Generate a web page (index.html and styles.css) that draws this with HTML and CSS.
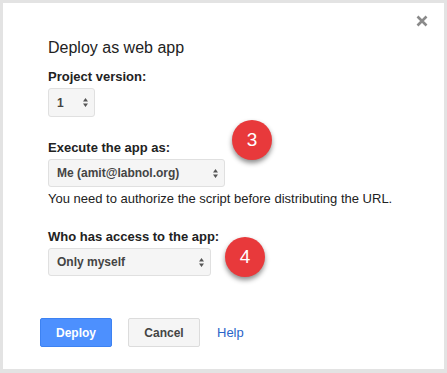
FILE: index.html
```html
<!DOCTYPE html>
<html lang="en">
  <head>
    <meta charset="UTF-8" />
    <meta name="viewport" content="width=device-width, initial-scale=1.0" />
    <title>Deploy as web app</title>
    <link rel="stylesheet" href="styles.css">
  </head>
  <body>
    <div class="dialog">
      <button class="close" title="Close">
        <svg width="12" height="12" viewBox="0 0 12 12">
          <path d="M1.5 1.5 L10.5 10.5 M10.5 1.5 L1.5 10.5" stroke="#8a8a8a" stroke-width="2.6" />
        </svg>
      </button>

      <h1>Deploy as web app</h1>

      <div class="field first">
        <label>Project version:</label>
        <div class="select version">
          <span>1</span>
          <svg class="arrows" width="5" height="9" viewBox="0 0 5 9">
            <path d="M2.5 0 L5 3.5 L0 3.5 Z M2.5 9 L5 5.5 L0 5.5 Z" fill="#555" />
          </svg>
        </div>
      </div>

      <div class="field">
        <label>Execute the app as:</label>
        <div class="select execute">
          <span>Me (amit@labnol.org)</span>
          <svg class="arrows" width="5" height="9" viewBox="0 0 5 9">
            <path d="M2.5 0 L5 3.5 L0 3.5 Z M2.5 9 L5 5.5 L0 5.5 Z" fill="#555" />
          </svg>
        </div>
        <p class="hint">You need to authorize the script before distributing the URL.</p>
      </div>

      <div class="field">
        <label>Who has access to the app:</label>
        <div class="select access">
          <span>Only myself</span>
          <svg class="arrows" width="5" height="9" viewBox="0 0 5 9">
            <path d="M2.5 0 L5 3.5 L0 3.5 Z M2.5 9 L5 5.5 L0 5.5 Z" fill="#555" />
          </svg>
        </div>
      </div>

      <div class="actions">
        <button class="btn deploy">Deploy</button>
        <button class="btn cancel">Cancel</button>
        <a href="#" class="help">Help</a>
      </div>

      <span class="badge badge-3">3</span>
      <span class="badge badge-4">4</span>
    </div>
  </body>
</html>
```

FILE: styles.css
```css
body {
  font-family: "Liberation Sans", Arial, sans-serif;
  margin: 0;
  padding: 3px;
  background-color: #e3e3e3;
  color: #222;
}
.dialog {
  position: relative;
  background: white;
  height: 366px;
  box-sizing: border-box;
  padding: 36px 0 0 45px;
}
.close {
  position: absolute;
  top: 12px;
  right: 16px;
  padding: 0;
  border: none;
  background: none;
  cursor: pointer;
}
.close svg {
  display: block;
}
h1 {
  margin: 0;
  font-size: 16px;
  font-weight: normal;
  line-height: 18px;
}
.field {
  margin-top: 23px;
}
.field.first {
  margin-top: 12px;
}
label {
  display: block;
  font-size: 13px;
  font-weight: bold;
  line-height: 15px;
  margin-bottom: 4px;
}
.select {
  display: flex;
  align-items: center;
  justify-content: space-between;
  box-sizing: border-box;
  height: 28px;
  padding: 0 6px 0 8px;
  background: #f5f5f5;
  border: 1px solid #e0e0e0;
  border-radius: 3px;
  font-size: 12px;
  font-weight: bold;
  color: #444;
}
.select.version {
  width: 47px;
  height: 29px;
}
.select.execute {
  width: 177px;
}
.select.access {
  width: 163px;
}
.hint {
  margin: 4px 0 0;
  font-size: 13px;
  line-height: 15px;
}
.actions {
  display: flex;
  align-items: center;
  margin: 42px 0 0 -8px;
}
.btn {
  height: 29px;
  width: 72px;
  border-radius: 2px;
  font-family: "Liberation Sans", Arial, sans-serif;
  font-size: 12px;
  font-weight: bold;
  cursor: pointer;
}
.deploy {
  background-color: #4d90fe;
  border: 1px solid #3d82f2;
  color: white;
}
.cancel {
  margin-left: 16px;
  background-color: #f5f5f5;
  border: 1px solid #dcdcdc;
  color: #444;
}
.help {
  margin-left: 17px;
  font-size: 13px;
  color: #2a64c9;
  text-decoration: none;
}
.badge {
  position: absolute;
  width: 40px;
  height: 40px;
  border-radius: 50%;
  background: #e8393b;
  box-shadow: 0 3px 5px rgba(0, 0, 0, 0.45);
  color: white;
  font-size: 19px;
  line-height: 40px;
  text-align: center;
}
.badge-3 {
  left: 229px;
  top: 117px;
}
.badge-4 {
  left: 222px;
  top: 234px;
}
```
